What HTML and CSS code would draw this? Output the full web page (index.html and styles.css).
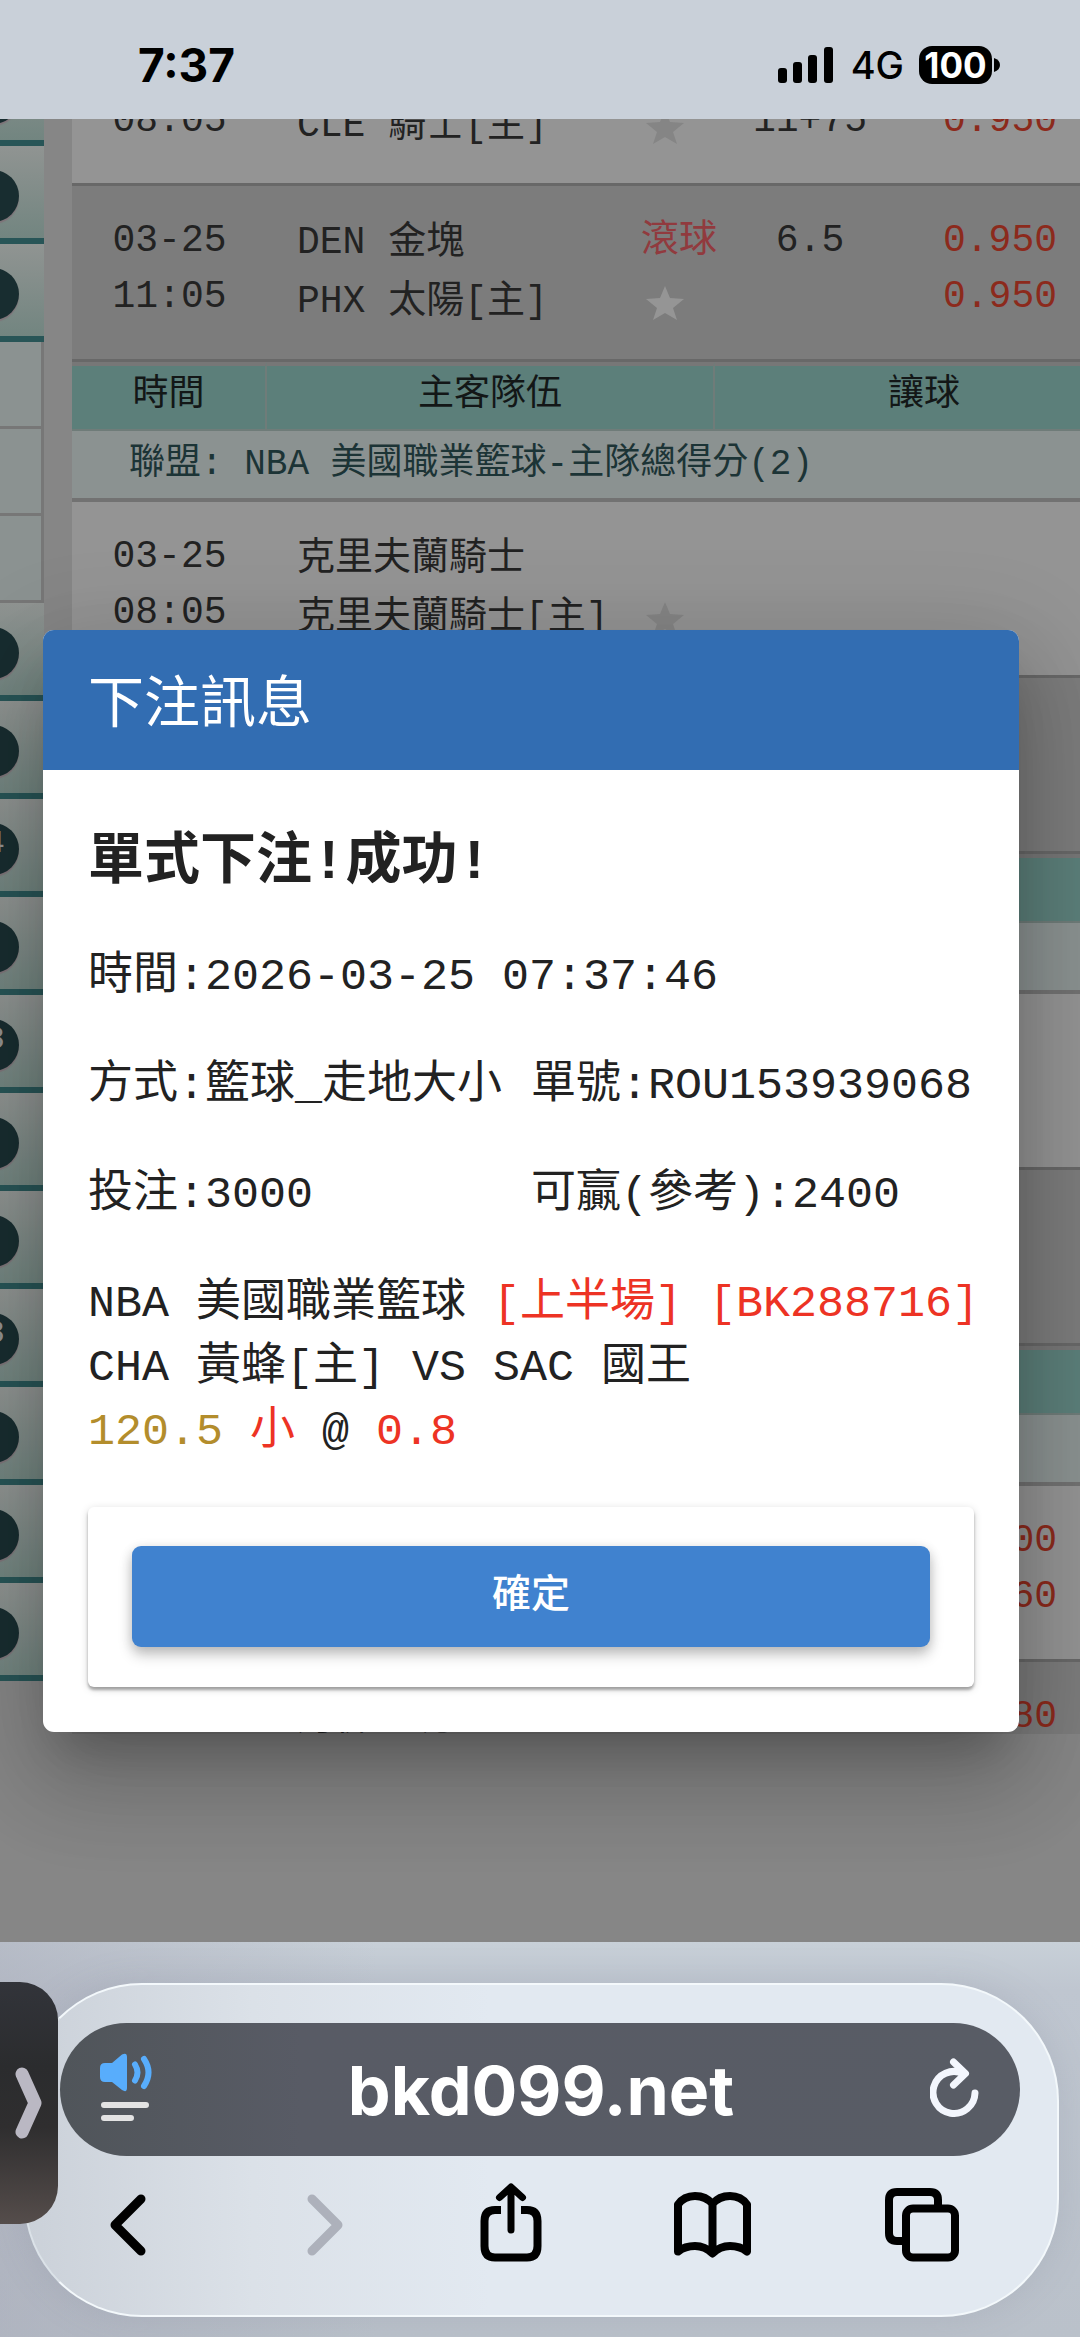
FILE: index.html
```html
<!DOCTYPE html>
<html lang="zh-Hant">
<head>
<meta charset="utf-8">
<meta name="viewport" content="width=device-width, initial-scale=1">
<title>下注訊息</title>
<link rel="stylesheet" href="styles.css">
</head>
<body>
<div class="screen">
  <header class="status">
    <span class="status-time">7:37</span>
    <span class="status-icons">
      <svg class="signal" width="56" height="36" viewBox="0 0 56 36" aria-hidden="true">
        <rect x="0" y="21" width="9" height="15" rx="3"/><rect x="15" y="15" width="9" height="21" rx="3"/><rect x="30" y="8" width="9" height="28" rx="3"/><rect x="46" y="0" width="9" height="36" rx="3"/>
      </svg>
      <span class="network">4G</span>
      <span class="battery">100</span>
      <svg class="battery-tip" width="6" height="14" viewBox="0 0 6 14" aria-hidden="true"><path d="M0 0Q6 2 6 7T0 14Z"/></svg>
    </span>
  </header>

  <main class="page">
    <nav class="side" aria-label="球種">
      <div class="side-item"><span class="badge"></span></div>
      <div class="side-item"><span class="badge"></span></div>
      <div class="side-item"><span class="badge"></span></div>
      <div class="side-sub"></div>
      <div class="side-sub"></div>
      <div class="side-sub"></div>
      <div class="side-item"><span class="badge"></span></div>
      <div class="side-item"><span class="badge"></span></div>
      <div class="side-item"><span class="badge">4</span></div>
      <div class="side-item"><span class="badge"></span></div>
      <div class="side-item"><span class="badge">8</span></div>
      <div class="side-item"><span class="badge"></span></div>
      <div class="side-item"><span class="badge"></span></div>
      <div class="side-item"><span class="badge">8</span></div>
      <div class="side-item"><span class="badge"></span></div>
      <div class="side-item"><span class="badge"></span></div>
      <div class="side-item"><span class="badge"></span></div>
    </nav>

    <section class="board">
      <table class="odds">
        <colgroup><col class="c-time"><col class="c-team"><col class="c-mark"><col class="c-line"><col class="c-odds"></colgroup>
        <tbody>
          <tr class="game">
            <td class="time">03-25<br>08:05</td>
            <td class="team"><br>CLE 騎士[主]</td>
            <td class="mark"><span class="live"></span><svg class="star" viewBox="0 0 38 34" aria-hidden="true"><path d="M19 0l5 12 14 1-11 9 4 12-12-7-12 7 4-12L0 13l14-1z"/></svg></td>
            <td class="line"><br>11+75</td>
            <td class="price"><br>0.950</td>
          </tr>
          <tr class="game alt">
            <td class="time">03-25<br>11:05</td>
            <td class="team">DEN 金塊<br>PHX 太陽[主]</td>
            <td class="mark"><span class="live">滾球</span><svg class="star" viewBox="0 0 38 34" aria-hidden="true"><path d="M19 0l5 12 14 1-11 9 4 12-12-7-12 7 4-12L0 13l14-1z"/></svg></td>
            <td class="line">6.5</td>
            <td class="price">0.950<br>0.950</td>
          </tr>
          <tr class="head"><th>時間</th><th colspan="2">主客隊伍</th><th colspan="2">讓球</th></tr>
          <tr class="league"><td colspan="5">聯盟: NBA 美國職業籃球-主隊總得分(2)</td></tr>
          <tr class="game">
            <td class="time">03-25<br>08:05</td>
            <td class="team">克里夫蘭騎士<br>克里夫蘭騎士[主]</td>
            <td class="mark"><span class="live"></span><svg class="star" viewBox="0 0 38 34" aria-hidden="true"><path d="M19 0l5 12 14 1-11 9 4 12-12-7-12 7 4-12L0 13l14-1z"/></svg></td>
            <td></td><td></td>
          </tr>
          <tr class="game alt"><td></td><td></td><td></td><td></td><td></td></tr>
          <tr class="head"><th></th><th colspan="2"></th><th colspan="2"></th></tr>
          <tr class="league"><td colspan="5"></td></tr>
          <tr class="game"><td></td><td></td><td></td><td></td><td></td></tr>
          <tr class="game alt"><td></td><td></td><td></td><td></td><td></td></tr>
          <tr class="head"><th></th><th colspan="2"></th><th colspan="2"></th></tr>
          <tr class="league"><td colspan="5"></td></tr>
          <tr class="game"><td></td><td></td><td></td><td></td><td class="price">0.900<br>0.960</td></tr>
          <tr class="game alt"><td></td><td class="team">丹佛金塊</td><td></td><td></td><td class="price">0.980</td></tr>
        </tbody>
      </table>
    </section>

    <div class="overlay">
      <section class="dialog" role="dialog" aria-labelledby="dialog-title">
        <h1 class="dialog-title" id="dialog-title">下注訊息</h1>
        <div class="dialog-body">
          <h2 class="result">單式下注!成功!</h2>
          <div class="fields">
            <p class="wide">時間:2026-03-25 07:37:46</p>
            <p>方式:籃球_走地大小</p>
            <p>單號:ROU153939068</p>
            <p>投注:3000</p>
            <p>可贏(參考):2400</p>
            <p class="wide">NBA 美國職業籃球 <span class="red">[上半場] [BK288716]</span><br>CHA 黃蜂[主] VS SAC 國王<br><span class="gold">120.5</span> <span class="red">小</span> @ <span class="red">0.8</span></p>
          </div>
          <div class="actions"><button class="confirm" type="button">確定</button></div>
        </div>
      </section>
    </div>
  </main>

  <footer class="browser">
    <div class="panel">
      <div class="address">
        <button class="icon-btn" type="button" aria-label="網頁選單">
          <svg width="52" height="70" viewBox="0 0 52 70">
            <path fill="#58adfc" d="M5 10h7L22 1.500Q27 -1 27 4v31Q27 40 22 37L12 29H5Q0 29 0 24V15Q0 10 5 10z"/>
            <path fill="none" stroke="#58adfc" stroke-width="6" stroke-linecap="round" d="M35 11.500Q40 19.500 35 27.500M44 6Q53 19.500 44 33"/>
            <path stroke="#e3e3e3" stroke-width="6" stroke-linecap="round" d="M4 52h42M4 65h27"/>
          </svg>
        </button>
        <a class="domain" href="#">bkd099.net</a>
        <button class="icon-btn" type="button" aria-label="重新載入">
          <svg width="50" height="60" viewBox="0 0 50 60" fill="none" stroke="#f3f6fd" stroke-width="7" stroke-linecap="round" stroke-linejoin="round">
            <path d="M33 15.500A21 21 0 1 0 45 35"/><path d="M23.500 4L35.500 15.500 23.500 27"/>
          </svg>
        </button>
      </div>
      <nav class="tools" aria-label="瀏覽器">
        <button class="icon-btn" type="button" aria-label="上一頁"><svg width="36" height="62" viewBox="0 0 36 62"><path d="M31 5L5 31l26 26" stroke-width="9"/></svg></button>
        <button class="icon-btn off" type="button" aria-label="下一頁" disabled><svg width="36" height="62" viewBox="0 0 36 62"><path d="M5 5l26 26L5 57" stroke-width="9"/></svg></button>
        <button class="icon-btn" type="button" aria-label="分享"><svg width="62" height="84" viewBox="0 0 62 84"><path d="M21 27H15Q4.500 27 4.500 38V63Q4.500 74.500 15 74.500H47Q57.500 74.500 57.500 63V38Q57.500 27 47 27H41" stroke-linecap="butt"/><path d="M31 47V5M19.500 14.500L31 4l11.500 10.500" stroke-width="7"/></svg></button>
        <button class="icon-btn" type="button" aria-label="書籤"><svg width="77" height="66" viewBox="0 0 77 66"><path d="M38.500 12Q32 4 21 4T4 12.500V59.500Q11 54 21 54T38.500 61.500Q46 54 56 54T73 59.500V12.500Q67 4 56 4T38.500 12zV61"/></svg></button>
        <button class="icon-btn" type="button" aria-label="分頁"><svg width="74" height="74" viewBox="0 0 74 74"><path d="M20 53H12Q4 53 4 45V12Q4 4 12 4H45Q53 4 53 12V20" stroke-linecap="butt"/><rect x="21" y="20.500" width="49" height="49" rx="7"/></svg></button>
      </nav>
    </div>
    <button class="drawer" type="button" aria-label="展開">
      <svg width="27" height="72" viewBox="0 0 27 72"><path d="M7 7l13 29L7 65"/></svg>
    </button>
  </footer>
</div>
</body>
</html>
```
FILE: styles.css
```css
* { box-sizing: border-box; }

body {
  margin: 0;
  background: #868686;
  font-family: "Liberation Mono", "Noto Sans CJK TC", monospace;
  color: #222;
}

button { border: 0; padding: 0; background: none; font: inherit; }
svg { display: block; }

.screen {
  display: flex;
  flex-direction: column;
  height: 100vh;
  overflow: hidden;
}

/* Status bar */
.status {
  display: flex;
  justify-content: space-between;
  align-items: center;
  height: 119px;
  padding: 10px 80px 0 138px;
  background: #c9d0d9;
  color: #000;
  font-family: Inter, "Liberation Sans", sans-serif;
}
.status-time { font-size: 46px; font-weight: 700; line-height: 56px; }
.status-icons { display: flex; align-items: center; }
.network { margin: 0 15px 0 17px; font-size: 38px; font-weight: 500; line-height: 46px; }
.battery {
  width: 73px;
  border-radius: 13px;
  background: #000;
  color: #fff;
  font-size: 35px;
  font-weight: 700;
  line-height: 38px;
  text-align: center;
}
.battery-tip { margin-left: 2px; }

/* Page behind the dialog */
.page {
  position: relative;
  display: flex;
  flex: 1;
  gap: 28px;
  min-height: 0;
  overflow: hidden;
}

.side { width: 44px; margin-top: -71px; overflow: hidden; flex: none; }
.side-item {
  display: flex;
  align-items: center;
  height: 98px;
  padding-top: 7px;
  border-bottom: 6px solid #285557;
  background: linear-gradient(#909492, #728580);
}
.badge {
  flex: none;
  width: 52px;
  height: 52px;
  margin-left: -33px;
  padding-right: 14px;
  border-radius: 50%;
  background: #182d30;
  box-shadow: 0 2px 1px #7e7479;
  color: #929292;
  font-size: 32px;
  line-height: 42px;
  text-align: right;
}
.side-sub {
  height: 87px;
  border: solid #777;
  border-width: 0 3px 3px 0;
  background: #8b9291;
}

.board { flex: 1; min-width: 0; margin-bottom: 208px; overflow: hidden; }
.odds {
  width: calc(100% + 55px);
  margin-top: -109px;
  border-collapse: separate;
  border-spacing: 0;
  table-layout: fixed;
  font-size: 38px;
  line-height: 56px;
}
.c-time { width: 195px; }
.c-team { width: 374px; }
.c-mark { width: 74px; }
.c-line { width: 190px; }
.odds td, .odds th { padding: 0; vertical-align: top; font-weight: 400; white-space: nowrap; }

.odds .game td { height: 176px; padding-top: 27px; border-bottom: 3px solid #686868; background: #949494; }
.odds .game.alt td { background: #7c7c7c; }
.game .time { text-align: center; }
.odds .game .team { padding-left: 30px; line-height: 59px; }
.game .line { text-align: center; }
.odds .game .price { padding-left: 38px; color: #8c2a1c; }
.live { display: block; height: 56px; color: #913a3e; }
.star { width: 38px; height: 34px; margin: 17px 0 0 5px; fill: #858585; }
.alt .star { fill: #959595; }

.head th {
  height: 69px;
  border-top: 4px solid #777;
  border-right: 2px solid #6f7c79;
  border-bottom: 2px solid #6f7c79;
  background: #5c7f7a;
  color: #131717;
  font-size: 36px;
  line-height: 60px;
}
.odds .league td {
  height: 71px;
  padding-left: 57px;
  border-bottom: 4px solid #727272;
  background: #8b9291;
  color: #1c3436;
  font-size: 36px;
  line-height: 67px;
}

/* Dialog */
.overlay { position: absolute; inset: 0; padding: 511px 61px 0 43px; }
.dialog {
  border-radius: 11px;
  background: #fff;
  box-shadow: 0 31px 42px -20px rgba(0, 0, 0, .2), 0 50px 90px 8px rgba(0, 0, 0, .14), 0 25px 100px 16px rgba(0, 0, 0, .12);
}
.dialog-title {
  margin: 0;
  padding: 37px 45px 23px;
  border-radius: 11px 11px 0 0;
  background: #326db2;
  color: #fff;
  font-size: 56px;
  font-weight: 400;
  line-height: 80px;
}
.dialog-body { padding: 53px 45px 45px; }
.result { margin: 0 0 43px; font-size: 56px; font-weight: 700; line-height: 80px; }
.fields {
  display: grid;
  grid-template-columns: 1fr 1fr;
  row-gap: 45px;
  font-size: 45px;
  line-height: 64px;
  white-space: nowrap;
}
.fields p { margin: 0; }
.fields .wide { grid-column: 1 / -1; }
.red { color: #ed3324; }
.gold { color: #b38d2c; }

.actions {
  margin-top: 42px;
  padding: 39px 44px 40px;
  border-radius: 6px;
  box-shadow: 0 3px 3px rgba(0, 0, 0, .3), 0 2px 8px rgba(0, 0, 0, .16);
}
.confirm {
  display: block;
  width: 100%;
  height: 101px;
  padding-bottom: 12px;
  border-radius: 9px;
  background: #4082cf;
  box-shadow: 0 8px 14px rgba(0, 0, 0, .22), 0 2px 12px rgba(0, 0, 0, .12);
  color: #fff;
  font-size: 39px;
  font-weight: 500;
}

/* Browser toolbar */
.browser {
  position: relative;
  padding: 41px 21px 20px 24px;
  background:
    linear-gradient(to right, rgba(165, 168, 182, .5), rgba(165, 168, 182, 0) 35%),
    linear-gradient(#c8d0d8, #bfc6d0 12%, #bac1ca);
}
.panel {
  padding: 38px 37px 21px 0;
  border: 2px solid #f3f8fb;
  border-left-color: #dbe2e8;
  border-radius: 118px;
  background: linear-gradient(to right, #cbd1d9, #dbe1e8 22%, #e2e9f1 45%);
  box-shadow: 0 0 36px rgba(120, 125, 145, .2);
}
.address {
  display: flex;
  align-items: center;
  justify-content: space-between;
  height: 133px;
  margin-left: 34px;
  padding: 0 40px;
  border-radius: 67px;
  background: linear-gradient(to right, #50555a, #585b65 25%, #585c65);
}
.address .icon-btn { padding-bottom: 4px; }
.domain {
  color: #fff;
  font-family: Inter, "Liberation Sans", sans-serif;
  font-size: 68px;
  font-weight: 700;
  line-height: 80px;
  text-decoration: none;
}
.tools {
  display: grid;
  grid-template-columns: 204fr 192fr 180fr 224fr 196fr;
  height: 138px;
}
.tools .icon-btn { display: grid; place-items: center; }
.tools svg { fill: none; stroke: #000; stroke-width: 8; stroke-linecap: round; stroke-linejoin: round; }
.tools .off svg { stroke: #adb1bb; }

.drawer {
  position: absolute;
  left: 0;
  top: 40px;
  width: 58px;
  height: 242px;
  padding-left: 15px;
  border-radius: 0 38px 38px 0;
  background: linear-gradient(#32343a, #2b2c2e 35%, #2f2e2f 60%, #554d4b);
}
.drawer svg { fill: none; stroke: #bab8c3; stroke-width: 13; stroke-linecap: round; stroke-linejoin: round; }
```
